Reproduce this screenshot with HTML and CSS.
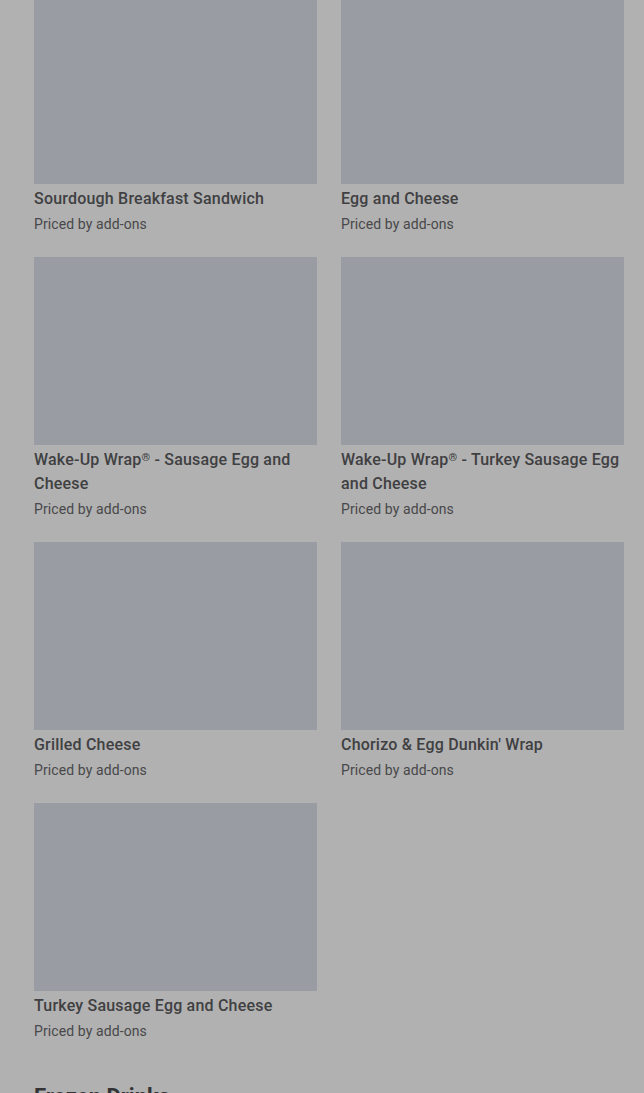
FILE: index.html
```html
<!DOCTYPE html>
<html lang="en">

<head>
    <meta charset="UTF-8">
    <meta name="viewport" content="width=device-width, initial-scale=1.0">
    <title>Menu</title>
    <link rel="stylesheet" href="styles.css">
</head>

<body>
    <div class="menu">
        <div class="grid">
            <div class="item">
                <div class="thumb"></div>
                <div class="name">Sourdough Breakfast Sandwich</div>
                <div class="price">Priced by add-ons</div>
            </div>
            <div class="item">
                <div class="thumb"></div>
                <div class="name">Egg and Cheese</div>
                <div class="price">Priced by add-ons</div>
            </div>
            <div class="item">
                <div class="thumb"></div>
                <div class="name">Wake-Up Wrap<span class="reg">®</span> - Sausage Egg and Cheese</div>
                <div class="price">Priced by add-ons</div>
            </div>
            <div class="item">
                <div class="thumb"></div>
                <div class="name">Wake-Up Wrap<span class="reg">®</span> - Turkey Sausage Egg and Cheese</div>
                <div class="price">Priced by add-ons</div>
            </div>
            <div class="item">
                <div class="thumb"></div>
                <div class="name">Grilled Cheese</div>
                <div class="price">Priced by add-ons</div>
            </div>
            <div class="item">
                <div class="thumb"></div>
                <div class="name">Chorizo &amp; Egg Dunkin' Wrap</div>
                <div class="price">Priced by add-ons</div>
            </div>
            <div class="item">
                <div class="thumb"></div>
                <div class="name">Turkey Sausage Egg and Cheese</div>
                <div class="price">Priced by add-ons</div>
            </div>
        </div>

        <h2 class="section-title">Frozen Drinks</h2>
    </div>
</body>

</html>
```

FILE: styles.css
```css
html,
body {
    margin: 0;
    padding: 0;
    background: #b1b1b1;
    overflow: hidden;
}

body {
    font-family: Roboto, "Liberation Sans", sans-serif;
    color: #3a3a3a;
}

.menu {
    padding: 0 20px 0 34px;
}

.grid {
    display: grid;
    grid-template-columns: 1fr 1fr;
    column-gap: 24px;
    row-gap: 23px;
    margin-top: -4px;
}

.thumb {
    height: 188px;
    background: #9a9ca3;
}

.name {
    margin-top: 3px;
    font-size: 16px;
    line-height: 24px;
    font-weight: 500;
    letter-spacing: 0.2px;
    color: #404042;
}

.reg {
    font-size: 11px;
    line-height: 11px;
    vertical-align: 4px;
}

.price {
    margin-top: 3px;
    font-size: 14px;
    line-height: 20px;
    letter-spacing: 0.1px;
    color: #48484a;
}

.section-title {
    margin: 42px 0 0;
    font-size: 22px;
    line-height: 28px;
    font-weight: 700;
    color: #333335;
}
```
